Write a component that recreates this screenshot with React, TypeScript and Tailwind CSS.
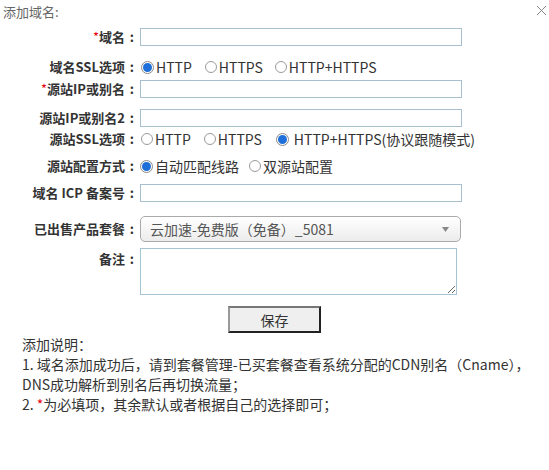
import React from 'react';

const font = { fontFamily: '"Noto Sans CJK SC", "Noto Sans", sans-serif' };

function Radio({ checked, label, className = '', wide }: { checked?: boolean; label: string; className?: string; wide?: boolean }) {
  return (
    <span className={`inline-flex items-center ${className}`}>
      {checked ? (
        <span className="w-[13px] h-[13px] rounded-full border border-[#8a8a8a] bg-white flex items-center justify-center">
          <span className="w-[9px] h-[9px] rounded-full bg-[#1e6fd9]" />
        </span>
      ) : (
        <span className="w-[12px] h-[12px] rounded-full border border-[#9a9a9a] bg-white" />
      )}
      <span className={wide ? 'ml-[5px]' : 'ml-[2px]'}>{label}</span>
    </span>
  );
}

function Label({ text, star }: { text: string; star?: boolean }) {
  return (
    <div className="w-[137px] shrink-0 text-right text-[13px] font-bold text-[#333] leading-[18px]">
      {star && <span className="text-[#e60012] font-normal">*</span>}
      {text}
      <span className="inline-block w-[12px] pr-[3px] text-right">:</span>
    </div>
  );
}

function TextInput() {
  return <input className="ml-[3px] w-[322px] h-[18px] border border-[#a7bfcf] bg-white outline-none" />;
}

export default function App() {
  return (
    <div className="w-[549px] h-[470px] bg-white relative text-[#333]" style={font}>
      <div className="h-[24px] pl-[3px] text-[13px] leading-[24px] text-[#666]">添加域名:</div>
      <svg className="absolute left-[536px] top-[5px]" width="11" height="11" viewBox="0 0 11 11">
        <path d="M1 1 L10 10 M10 1 L1 10" stroke="#888" strokeWidth="1" fill="none" />
      </svg>

      <div className="mt-[4px] h-[18px] flex items-center">
        <Label text="域名" star />
        <TextInput />
      </div>

      <div className="mt-[12px] h-[18px] flex items-center text-[14px]">
        <Label text="域名SSL选项" />
        <div className="ml-[4px] flex items-center">
          <Radio checked label="HTTP" />
          <Radio label="HTTPS" className="ml-[13px]" />
          <Radio label="HTTP+HTTPS" className="ml-[12px]" />
        </div>
      </div>

      <div className="mt-[4px] h-[18px] flex items-center">
        <Label text="源站IP或别名" star />
        <TextInput />
      </div>

      <div className="mt-[11px] h-[18px] flex items-center">
        <Label text="源站IP或别名2" />
        <TextInput />
      </div>

      <div className="mt-[3px] h-[18px] flex items-center text-[14px]">
        <Label text="源站SSL选项" />
        <div className="ml-[4px] flex items-center">
          <Radio label="HTTP" />
          <Radio label="HTTPS" className="ml-[13px]" />
          <Radio checked wide label="HTTP+HTTPS(协议跟随模式)" className="ml-[14px]" />
        </div>
      </div>

      <div className="mt-[9px] h-[18px] flex items-center text-[14px]">
        <Label text="源站配置方式" />
        <div className="ml-[3px] flex items-center">
          <Radio checked label="自动匹配线路" />
          <Radio label="双源站配置" className="ml-[10px]" />
        </div>
      </div>

      <div className="mt-[9px] h-[18px] flex items-center">
        <Label text="域名 ICP 备案号" />
        <TextInput />
      </div>

      <div className="mt-[14px] h-[26px] flex items-center">
        <Label text="已出售产品套餐" />
        <div className="ml-[3px] w-[321px] h-[26px] rounded-[5px] border border-[#aaa] bg-gradient-to-b from-white to-[#ececec] flex items-center justify-between pl-[9px] pr-[11px] text-[14px] text-[#555]">
          <span>云加速-免费版（免备）_5081</span>
          <svg width="7" height="5" viewBox="0 0 7 5">
            <path d="M0 0 L7 0 L3.5 5 Z" fill="#888" />
          </svg>
        </div>
      </div>

      <div className="mt-[6px] h-[47px] flex items-start">
        <div className="pt-[2px]">
          <Label text="备注" />
        </div>
        <textarea className="ml-[3px] w-[317px] h-[47px] border border-[#a7c4d4] bg-white outline-none resize" />
      </div>

      <div className="mt-[11px] flex justify-center">
        <button className="w-[93px] h-[27px] bg-[#efefef] border-2 border-t-[#777] border-l-[#999] border-r-[#222] border-b-[#222] text-[14px] text-[#333] leading-none">
          保存
        </button>
      </div>

      <div className="mt-[1px] pl-[22px] text-[14px] leading-[20px] text-[#333]">
        <div>添加说明：</div>
        <div>1. 域名添加成功后，请到套餐管理-已买套餐查看系统分配的CDN别名（Cname），</div>
        <div>DNS成功解析到别名后再切换流量；</div>
        <div>
          2. <span className="text-[#e60012]">*</span>为必填项，其余默认或者根据自己的选择即可；
        </div>
      </div>
    </div>
  );
}
